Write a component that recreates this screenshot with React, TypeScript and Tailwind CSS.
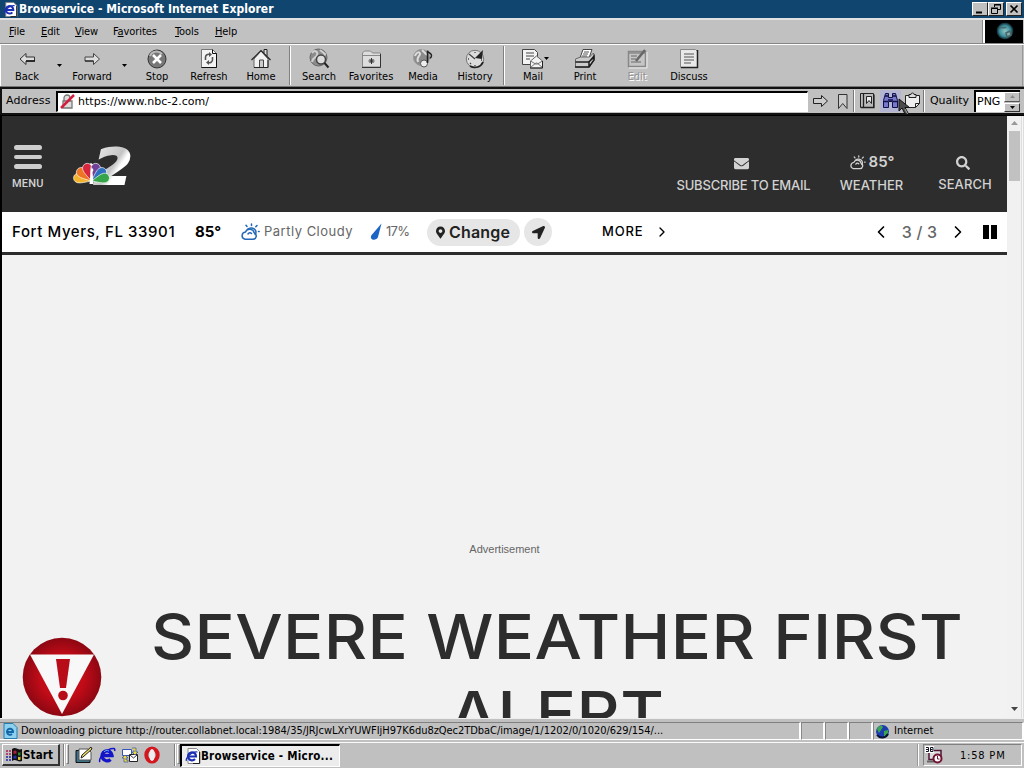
import React from "react";
import { ChevronLeft, ChevronRight } from "lucide-react";
import { FaEnvelope, FaLocationArrow, FaMapMarkerAlt, FaSearch } from "react-icons/fa";

const ui = "font-['DejaVu_Sans_Condensed','DejaVu_Sans',sans-serif] text-[11px] leading-[14px]";
const site = "font-['Inter',sans-serif]";

function IELogo({ size = 16 }: { size?: number }) {
  return (
    <svg width={size} height={size} viewBox="0 0 16 16">
      <path d="M3 .5h8.500l3.500 3.500v11.500H3z" fill="#fff" stroke="#888" />
      <path d="M14.500 4v11.500H8" fill="none" stroke="#222" />
      <path d="M3.500 8.500h7.500a4 4 0 1 0-1 2.500" fill="none" stroke="#1b2fb4" strokeWidth="2.200" />
      <path d="M1.500 13C0 11 6 3 12.500 4" fill="none" stroke="#1b2fb4" strokeWidth="1.200" />
    </svg>
  );
}

function BigE() {
  return (
    <svg width="18" height="18" viewBox="0 0 18 18">
      <path d="M5 9.500h9a5 5 0 1 0-1.500 4" fill="none" stroke="#1414c8" strokeWidth="3.400" />
      <path d="M2 16C0 13 8 2 16 2.500c1 .5 1 1.500.5 2.500" fill="none" stroke="#1414c8" strokeWidth="1.500" />
      <path d="M6 6c1-1.500 3-2 5-1" fill="none" stroke="#5db8ff" />
    </svg>
  );
}

function WinButton({ children }: { children: React.ReactNode }) {
  return (
    <div className="h-[14px] w-4 border border-t-white border-l-white border-r-[#222] border-b-[#222] bg-[#c0c0c0]">
      <svg width="14" height="12" viewBox="0 0 14 12" fill="none" stroke="#000">
        {children}
      </svg>
    </div>
  );
}

function Tool({ label, disabled, children }: { label: string; disabled?: boolean; children: React.ReactNode }) {
  return (
    <div className="flex w-[52px] flex-col items-center pt-[3px]">
      <svg width="22" height="21" viewBox="0 0 22 21" fill="none">
        {children}
      </svg>
      <div className={`${ui} mt-px whitespace-nowrap ${disabled ? "text-[#949494] [text-shadow:1px_1px_0_#fff]" : "text-black"}`}>{label}</div>
    </div>
  );
}

function Caret() {
  return (
    <div className="flex w-[13px] items-center justify-center">
      <svg width="5" height="3" viewBox="0 0 5 3"><path d="M0 0h5L2.500 3z" fill="#000" /></svg>
    </div>
  );
}

function Divider() {
  return <div className="mx-[2px] my-px w-[2px] border-l border-l-[#808080] border-r border-r-white" />;
}

function PartlyCloudy({ color, w = 20, h = 18 }: { color: string; w?: number; h?: number }) {
  return (
    <svg width={w} height={h} viewBox="0 0 20 18" fill="none" stroke={color} strokeWidth="1.500" strokeLinecap="round">
      <path d="M5 16.300h8a3.400 3.400 0 0 0 1.200-6.500A4.600 4.600 0 0 0 5.500 9 3.700 3.700 0 0 0 5 16.300z" />
      <path d="M7.500 6.300c2.500-2.300 6.500-1.500 8 1 .9 1.700.5 3-.4 4.200M8 11c1-1.500 2.500-1.500 3.500-.5" />
      <path d="M11.500 1v1.500M6 2.300l1 1.200M17 2.500l-1.200 1.300M19.200 8.500h-.7" />
    </svg>
  );
}

function NbcLogo() {
  const c = ["#f4b32c", "#ee7523", "#d8263c", "#704199", "#2f6fc0", "#36a448"];
  const a = [-77, -50, -18, 18, 50, 77];
  return (
    <svg className="overflow-visible" width="60" height="42" viewBox="0 0 60 42">
      <defs>
        <linearGradient id="two" x1="0" y1="0" x2="1" y2="1">
          <stop offset="0" stopColor="#f4f4f4" />
          <stop offset=".5" stopColor="#c4c4c4" />
          <stop offset=".6" stopColor="#fff" />
        </linearGradient>
      </defs>
      <text transform="translate(22 39.500) scale(1.100 1)" fontFamily="DejaVu Sans" fontWeight="700" fontStyle="italic" fontSize="50" fill="url(#two)" stroke="url(#two)" strokeWidth="2">2</text>
      <path d="M19 40 15 22l4-3 4 3z" fill="#fff" />
      {a.map((r, i) => (
        <path key={r} transform={`translate(19.500 37) rotate(${r})`} d="M0 0C-2-5-5-10-4.800-13.500a4.800 4.800 0 0 1 9.600 0C5-10 2-5 0 0z" fill={c[i]} stroke="#fff" strokeWidth=".6" />
      ))}
      <path d="m19.500 23 2 3-1 2 1 12h-4l1-11z" fill="#fff" />
    </svg>
  );
}

function TitleBar() {
  return (
    <div className="flex h-[18px] shrink-0 items-center bg-[#10456f] pr-0.5 pl-[3px]">
      <IELogo size={15} />
      <div className="ml-px flex-1 pt-px font-['DejaVu_Sans_Condensed',sans-serif] text-[12px] leading-[17px] font-bold tracking-[0.06px] text-white">
        Browservice - Microsoft Internet Explorer
      </div>
      <WinButton><path d="M3 9.500h6" strokeWidth="2" /></WinButton>
      <WinButton><path d="M5.500 4V1.500h6v5H9M5 2h7M2.500 5.500h6v5h-6zM2 5h7" /></WinButton>
      <div className="w-0.5" />
      <WinButton><path d="m3.500 2.500 7 7m0-7-7 7" strokeWidth="1.700" /></WinButton>
    </div>
  );
}

function MenuBar() {
  const items = [["F", "ile", "w-[32px]"], ["E", "dit", "w-[34px]"], ["V", "iew", "w-[38px]"], ["F", "avorites", "w-[62px]"], ["T", "ools", "w-[40px]"], ["H", "elp", "w-[40px]"]];
  return (
    <div className="flex h-[26px] shrink-0 border-t-2 border-b border-t-[#e2e2e2] border-b-[#868686] bg-[#c1c1c1]">
      <div className={`${ui} flex flex-1 border-r border-[#888] pt-[5px] pl-[9px] tracking-[-0.1px] text-black`}>
        {items.map(([u, rest, w]) => (
          <div key={rest} className={`${w} whitespace-nowrap`}>
            {rest === "avorites" ? <>F<u>a</u>vorites</> : <><u>{u}</u>{rest}</>}
          </div>
        ))}
      </div>
      <div className="mr-px flex w-10 items-center justify-center border-l-2 border-l-white bg-black">
        <svg width="20" height="20" viewBox="0 0 20 20">
          <defs><radialGradient id="globe"><stop offset="0" stopColor="#8fc4c2" /><stop offset=".65" stopColor="#3b8d9c" /><stop offset="1" stopColor="#0a1c22" /></radialGradient></defs>
          <circle cx="11" cy="9" r="8.500" fill="url(#globe)" />
          <path d="M5 7c3-3 5 0 7-2M12 11l4-2 1 4-4 2z" stroke="#47696b" strokeWidth="1.500" fill="#8aa8a5" />
        </svg>
      </div>
    </div>
  );
}

function Toolbar() {
  return (
    <div className="flex h-[43px] shrink-0 border-t border-b border-t-white border-b-[#777] bg-[#c0c0c0] pr-[1px]">
      <div className="flex flex-1 border-r border-l border-r-[#999] border-l-white">
        <Tool label="Back"><path d="M4 11 10 5.500V9h8.500v4H10v3.500z" fill="#ddd" stroke="#333" /><path d="M10 13h9" stroke="#111" strokeWidth="1.500" /></Tool>
        <Caret />
        <Tool label="Forward"><path d="m18.500 11-6-5.500V9H4v4h8.500v3.500z" fill="#ddd" stroke="#444" /><path d="M4 13h8.500" stroke="#111" /></Tool>
        <Caret />
        <Tool label="Stop"><circle cx="11" cy="11" r="9" fill="#777" stroke="#333" /><path d="M4 8c2-5 8-6 12-2" stroke="#bbb" strokeWidth="2" /><path d="m7 7 8 8m0-8-8 8" stroke="#fff" strokeWidth="2.500" /></Tool>
        <Tool label="Refresh"><path d="M3.500 1.500h11l4 4v14h-15z" fill="#f4f4f4" stroke="#777" /><path d="M18.500 5.500v14h-15M14.500 1.500v4h4" stroke="#111" /><path d="M7.500 12V9a3 3 0 0 1 4-2.500M14.500 9v3a3 3 0 0 1-4 2.500" stroke="#555" strokeWidth="1.600" /><path d="m11 4 3 2.500L11 9zM11 12l-3 2.500L11 17z" fill="#555" /></Tool>
        <Tool label="Home"><path d="M14 5V1.500h3V8" fill="#ddd" stroke="#222" /><path d="M4 11v8.500h14V11l-7-8z" fill="#f2f2f2" stroke="#666" /><path d="M1.500 12 11 2.500l9.500 9.500" stroke="#222" strokeWidth="1.200" /><path d="M9.500 19v-7h4v7" stroke="#444" fill="#ccc" /><path d="M18 12v7.500H4" stroke="#222" /></Tool>
        <Divider />
        <Tool label="Search"><circle cx="10.500" cy="9.500" r="8.500" fill="#8b8b8b" stroke="#666" /><path d="M4 5c3-4 6-1 5 2s-4 2-5 7M12 2l5 4-2 4" stroke="#d0d0d0" strokeWidth="2" /><circle cx="13" cy="11.500" r="4.500" fill="#ddd" stroke="#444" strokeWidth="1.500" /><path d="m16.500 15 4 4.500" stroke="#222" strokeWidth="2" /></Tool>
        <Tool label="Favorites"><path d="M2.500 19V5l2-2h6l2 2h8v14z" fill="#ddd" stroke="#888" /><path d="M2 19.500h18.500V6" stroke="#333" /><path d="M3 7.500h17" stroke="#888" /><path d="M11.500 10v6M8.500 13h6M9.500 11l4 4m0-4-4 4" stroke="#333" /></Tool>
        <Tool label="Media"><circle cx="9.500" cy="9.500" r="8" fill="#8b8b8b" stroke="#999" /><path d="M3 8c2-5 5-4 5-2s-4 3-2 8M10 2l5 5" stroke="#ddd" strokeWidth="2" /><circle cx="12" cy="15.500" r="3.500" fill="#eee" stroke="#555" /><path d="M15.500 15V2.500c.5 3 4 2 4 5 0 2-1 2-1.500 3" stroke="#222" strokeWidth="1.500" /></Tool>
        <Tool label="History"><circle cx="11" cy="11" r="8.700" fill="#dcdcdc" stroke="#777" /><path d="M19 14c-2 5-8 7-13 4" stroke="#222" strokeWidth="1.800" /><path d="m11 10 8-8-1 9z" fill="#222" /><path d="m5 6 6 5M11 4v1M4 11h1M11 17v1M17 12h1M7 15l-1 1" stroke="#444" strokeWidth="1.300" /></Tool>
        <Divider />
        <div className="relative">
          <Tool label="Mail"><path d="M.5 1.500h12l3 3v12H.5z" fill="#f4f4f4" stroke="#444" /><path d="M4 5h8M4 8h8M4 11h4" stroke="#444" /><path d="m8.500 13 6-5 6 5v7h-12z" fill="#f4f4f4" stroke="#666" /><path d="m9 19 5-4h1l5 4M8.500 13l5 3h2l5-3" stroke="#777" /><path d="M8 20h12.500v-7" stroke="#222" /></Tool>
          <div className="absolute top-[6px] left-[33px] flex h-[14px]"><Caret /></div>
        </div>
        <Tool label="Print"><path d="m6 10 3-8.500h9L15 10z" fill="#fff" stroke="#444" /><path d="M10 4h5M9 6h5M8 8h5" stroke="#555" /><path d="m1.500 11 5-2h9l4-4 1 6-5 8h-14z" fill="#ccc" stroke="#666" /><path d="M1.500 14h13l6-5M1 19h14l5-7v-4l-5 6v5" stroke="#1c1c1c" strokeWidth="1.500" /></Tool>
        <Tool label="Edit" disabled><path d="M2.500 3.500h17v15h-17z" fill="#c5c5c5" stroke="#888" strokeWidth="1.500" /><path d="M3 5h16M5 8h6M5 11h5M5 14h10" stroke="#888" strokeWidth="1.500" /><path d="m10 13 9-11" stroke="#666" strokeWidth="2.500" /><path d="M3 20h18V4" stroke="#eee" /></Tool>
        <Tool label="Discuss"><path d="M2.500 1.500h15l2 2v16h-17z" fill="#e9e9e9" stroke="#888" /><path d="M19.500 2v17.500H3" stroke="#222" strokeWidth="1.500" /><path d="M6 6h10M6 9h10M6 12h10M6 15h7" stroke="#555" /></Tool>
      </div>
    </div>
  );
}

function AddressBar() {
  const box = "flex h-[22px] items-center justify-center";
  return (
    <div className="flex h-7 shrink-0 items-center border-t-2 border-b-2 border-l-2 border-[#111] bg-[#c0c0c0] pr-1 font-['DejaVu_Sans',sans-serif] text-[11px] leading-[14px] text-black">
      <div className="w-[54px] pl-1 tracking-[0.1px]">Address</div>
      <div className="flex h-[21px] w-[752px] items-center border-t-2 border-r border-b border-l-2 border-t-black border-l-black border-r-white border-b-white bg-white pl-px">
        <svg width="18" height="18" viewBox="0 0 18 18" fill="none">
          <path d="M5 8V5a3 3 0 0 1 6 0v3M4 8h9v7H4z" stroke="#777" strokeWidth="1.300" fill="#ddd" />
          <path d="M2 15 15 2" stroke="#d51d3e" strokeWidth="2.500" />
        </svg>
        <span className="ml-px tracking-[0.02px]">https://www.nbc-2.com/</span>
      </div>
      <div className={`${box} w-[25px]`}>
        <svg width="18" height="14" viewBox="0 0 18 14"><path d="M1.500 4.500h8V1.500l6 5.500-6 5.500v-3h-8z" fill="#ccc" stroke="#222" /></svg>
      </div>
      <div className={`${box} w-[20px]`}>
        <svg width="12" height="17" viewBox="0 0 12 17"><path d="M1.500 1.500h8.500v14l-4.250-5-4.250 5z" fill="#ccc" stroke="#333" /></svg>
      </div>
      <div className="h-[22px] border-r border-l border-r-white border-l-[#777]" />
      <div className={`${box} w-[25px]`}>
        <svg width="17" height="18" viewBox="0 0 17 18" fill="none"><path d="M1.500 1.500h13v14h-13z" fill="#bbb" stroke="#222" /><path d="M4.500 2v13M2 15.500h13v-13" stroke="#222" strokeWidth="1.300" /><path d="M7.500 4.500h5v7l-2.500-3-2.500 3z" fill="#eee" stroke="#222" /></svg>
      </div>
      <div className={`${box} relative w-[21px] bg-[#b4b4d3]`}>
        <svg width="17" height="18" viewBox="0 0 17 18"><path d="M3.500 1.500h3v4h4v-4h3l2 7v7h-5v-6h-4v6h-5v-7z" fill="#7777cc" stroke="#101044" /><path d="M3 4h4m3 0h4M2 9.500h4m5 0h4M6 8h5" stroke="#101044" strokeWidth="1.300" /></svg>
        <svg className="absolute top-[8px] left-[18px] z-10" width="14" height="18" viewBox="0 0 14 18"><path d="M1 1v12l3-3 3 6 3-1-3-5.500h4.500z" fill="#4c4c4c" stroke="#111" /><path d="M7 11l2.500 5" stroke="#aaa" /></svg>
      </div>
      <div className={`${box} w-[22px]`}>
        <svg width="17" height="18" viewBox="0 0 17 18"><path d="M1.500 3.500h14v8l-4 4h-8l-2-2z" fill="#eee" stroke="#222" /><path d="M5 5.500v-3h2a1.500 1.500 0 0 1 3 0h2v3z" fill="#ddd" stroke="#222" /><path d="M11.500 15.500v-4h4" fill="none" stroke="#222" /></svg>
      </div>
      <div className="h-[22px] border-r border-l border-r-white border-l-[#777]" />
      <div className="flex-1 pl-[5px] tracking-[-0.05px]">Quality</div>
      <div className="flex h-[22px] w-[46px] items-center border-t-2 border-l-2 border-t-black border-l-black bg-white">
        <span className="w-7 pl-px">PNG</span>
        <div className="flex h-full w-[16px] flex-col gap-px bg-[#c0c0c0] text-black">
          <div className="flex flex-1 items-center justify-center border border-t-white border-l-white border-r-[#777] border-b-[#555]"><svg width="5" height="3"><path d="M0 3h5L2.500 0z" fill="#888" /></svg></div>
          <div className="flex flex-1 items-center justify-center border border-t-white border-l-white border-r-[#333] border-b-[#333]"><svg width="5" height="3"><path d="M0 0h5L2.500 3z" /></svg></div>
        </div>
      </div>
    </div>
  );
}

function SiteHeader() {
  return (
    <div className={`${site} flex h-[96px] shrink-0 bg-[#2d2d2d] text-[13px] leading-4 text-[#d2d2d2]`}>
      <div className="w-[70px] pt-[29px] pl-[10px]">
        <div className="ml-0.5 flex w-7 flex-col gap-[5px]">
          <div className="h-[4.500px] rounded-sm bg-[#cecece]" />
          <div className="h-[4.500px] rounded-sm bg-[#cecece]" />
          <div className="h-[4.500px] rounded-sm bg-[#cecece]" />
        </div>
        <div className="mt-2 font-['Roboto',sans-serif] text-[11px] leading-[14px] font-medium tracking-[0.2px]">MENU</div>
      </div>
      <div className="flex-1 pt-[28px]"><NbcLogo /></div>
      <div className="flex w-[134px] flex-col items-center pt-[40px]">
        <FaEnvelope size={15} className="mr-[3px]" />
        <div className="mt-[6px] -mr-px font-medium tracking-[-0.2px] whitespace-nowrap">SUBSCRIBE TO EMAIL</div>
      </div>
      <div className="ml-[30px] flex w-[63px] flex-col items-center pt-[38px]">
        <div className="flex items-center gap-[3px] text-[15px] font-semibold"><PartlyCloudy color="#d2d2d2" w={17} h={15} />85°</div>
        <div className="mt-[7px] font-medium">WEATHER</div>
      </div>
      <div className="mr-4 ml-9 flex w-[52px] flex-col items-center pt-[40px]">
        <FaSearch size={14} className="mr-1" />
        <div className="mt-[6px] font-medium tracking-[0.1px]">SEARCH</div>
      </div>
    </div>
  );
}

function WeatherStrip() {
  return (
    <div className={`${site} flex h-[43px] shrink-0 items-center border-b-[3px] border-[#2d2d2d] bg-white text-black`}>
      <div className="w-[183px] pl-[10px] text-[15px] font-medium tracking-[0.6px] whitespace-nowrap">Fort Myers, FL 33901</div>
      <div className="ml-[10px] w-[45px] text-[15px] font-bold">85°</div>
      <PartlyCloudy color="#2368b8" />
      <div className="ml-[4px] w-[106px] text-[13px] tracking-[0.5px] whitespace-nowrap text-[#666]">Partly Cloudy</div>
      <svg width="12" height="18" viewBox="0 0 12 18"><path d="M11.500.5 8 14c-1 3-6 4-7 1-.5-1.500.5-3 1.500-4z" fill="#1b65c5" /></svg>
      <div className="ml-[4px] w-[41px] text-[13px] tracking-[-0.7px] text-[#666]">17%</div>
      <div className="flex h-[27px] w-[93px] items-center rounded-full bg-[#e6e6e6] pl-[9px] text-[16px] font-semibold tracking-[0.2px] text-[#222]">
        <FaMapMarkerAlt size={13} className="mr-1 w-[9px] shrink-0" />Change
      </div>
      <div className="ml-1 flex size-7 items-center justify-center rounded-full bg-[#e6e6e6] text-[#222]"><FaLocationArrow size={13} /></div>
      <div className="ml-[50px] w-[52px] text-[13px] font-medium tracking-[0.8px]">MORE</div>
      <ChevronRight size={16} />
      <div className="flex-1" />
      <ChevronLeft size={20} />
      <div className="w-[57px] text-center text-[16px] font-medium tracking-[0.2px] whitespace-nowrap text-[#666]">3 / 3</div>
      <ChevronRight size={20} />
      <div className="mr-[10px] ml-[15px] flex gap-0.5"><div className="h-[14px] w-[6px] bg-black" /><div className="h-[14px] w-[6px] bg-black" /></div>
    </div>
  );
}

function AlertIcon() {
  return (
    <svg width="80" height="80" viewBox="0 0 80 80">
      <defs><radialGradient id="red"><stop offset=".55" stopColor="#c20c18" /><stop offset="1" stopColor="#8c0712" /></radialGradient></defs>
      <circle cx="40" cy="40" r="39.300" fill="url(#red)" />
      <path d="M8 17.500h64L40 77z" fill="#f8f8f8" />
      <path d="M34 22h14l-4 29h-6z" fill="#b80d19" />
      <circle cx="41" cy="58.500" r="4.800" fill="#b80d19" />
    </svg>
  );
}

function Page() {
  return (
    <div className="flex h-[603px] shrink-0 border-t border-l-2 border-black bg-[#f2f2f2]">
      <div className="flex w-[1005px] flex-col overflow-hidden">
        <SiteHeader />
        <WeatherStrip />
        <div className="mt-[287px] text-center font-['Liberation_Sans',sans-serif] text-[11px] leading-[14px] text-[#666]">Advertisement</div>
        <div className="mt-[41px] flex">
          <div className="mt-[40px] ml-5"><AlertIcon /></div>
          <div className={`${site} ml-[8px] w-[894px] scale-x-[1.08] pt-px text-center text-[62px] leading-[77px] font-[550] tracking-[0.300px] whitespace-nowrap text-[#2d2d2d]`}>
            <div>SEVERE WEATHER FIRST</div>
            <div>ALERT</div>
          </div>
        </div>
      </div>
      <div className="flex w-[14px] flex-col items-center bg-[#f1f1f1]">
        <svg className="mt-[5px]" width="7" height="4"><path d="M0 4h7L3.500 0z" fill="#999" /></svg>
        <div className="mt-[6px] h-[50px] w-[11px] bg-[#c1c1c1]" />
        <div className="flex-1" />
        <svg className="mb-[7px]" width="7" height="4"><path d="M0 0h7L3.500 4z" fill="#444" /></svg>
      </div>
      <div className="flex-1 border-r border-l border-[#ddd] bg-[#f7f7f7]" />
    </div>
  );
}

function StatusBar() {
  const cell = "border-t border-r-2 border-b border-t-[#808080] border-r-white border-b-white border-l border-l-[#888]";
  return (
    <div className="flex h-6 shrink-0 border-t border-[#eee] bg-[#c0c0c0] pt-[3px] pb-[2px] text-black">
      <div className={`${cell} ${ui} flex w-[801px] items-center border-l-0 pl-[3px] tracking-[-0.045px] whitespace-nowrap`}>
        <svg width="15" height="16" viewBox="0 0 15 16"><path d="M1 .5h9l4 4v11H1z" fill="#8ed0ef" stroke="#287dad" /><path d="M4 9h6a3 3 0 1 0-1 2" fill="none" stroke="#1267a6" strokeWidth="2" /></svg>
        <span className="ml-[3px]">Downloading picture http://router.collabnet.local:1984/35/JRJcwLXrYUWFIjH97K6du8zQec2TDbaC/image/1/1202/0/1020/629/154/...</span>
      </div>
      <div className={`${cell} w-6`} /><div className={`${cell} w-6`} /><div className={`${cell} w-6`} />
      <div className={`${cell} ${ui} flex flex-1 items-center pl-px`}>
        <svg width="15" height="15" viewBox="0 0 15 15"><circle cx="7.500" cy="7.500" r="6.500" fill="#1b3cae" /><path d="M2 5c2-4 5-4 6-2L6 6l-2 3zM9 7l4-1v3l-4 4z" fill="#39a64a" /><path d="M2 11c3 4 9 3 11-1" fill="none" stroke="#071333" strokeWidth="2" /></svg>
        <span className="ml-1">Internet</span>
      </div>
    </div>
  );
}

function Taskbar() {
  const bold = "font-['DejaVu_Sans_Condensed',sans-serif] text-[11.500px] leading-[14px] font-bold";
  const grip = <div className="flex h-[22px] gap-px"><div className="w-[2px] border-l border-[#808080] bg-white" /><div className="h-[20px] w-[3px] border border-t-white border-l-white border-r-[#777] border-b-[#777]" /></div>;
  return (
    <div className="flex h-[26px] shrink-0 items-center border-t border-[#fafafa] bg-[#c0c0c0] px-0.5 pb-px text-black">
      <div className={`${bold} flex h-[22px] w-[58px] items-center border-t border-r-2 border-b-2 border-l border-t-white border-l-white border-r-[#333] border-b-[#333] pl-[3px] tracking-[0.15px]`}>
        <svg className="shrink-0" width="17" height="16" viewBox="0 0 17 16"><path d="M6 2c4-3 6 2 10 0v12c-4 2-6-3-10 0z" fill="#111" /><path d="M7.500 4q2-1 3 0v3q-1-1-3 0z" fill="#b0203c" /><path d="M12 5q1 1 2.500 0v3q-1.500 1-2.500 0z" fill="#258a30" /><path d="M7.500 9q2-1 3 0v3q-1-1-3 0z" fill="#2430b0" /><path d="M12 9.500q1 1 2.500 0v3q-1.500 1-2.500 0z" fill="#d8c42a" /><path d="M0 4h2m1 0h2M0 7h2m1 0h2" stroke="#a41f55" strokeWidth="1.500" /><path d="M0 10h2m1 0h2M0 13h2m1 0h2" stroke="#2424a0" strokeWidth="1.500" /></svg>
        Start
      </div>
      <div className="ml-[3px] flex w-[111px] items-center">
        {grip}
        <div className="ml-[6px] flex items-center gap-[5px]">
          <svg width="18" height="18" viewBox="0 0 18 18"><path d="M1 4.500h14v12H1z" fill="#3c7389" stroke="#111" /><path d="M4 3h9l3 3v8H4z" fill="#fff" stroke="#555" /><path d="m6 12 1-3 9-8 1 2-9 8z" fill="#f1dc62" stroke="#222" /></svg>
          <BigE />
          <svg width="18" height="18" viewBox="0 0 18 18"><path d="M1.500 3.500h9v6h-9z" fill="#fff" stroke="#3355bb" /><path d="M8.500 8.500h8v7h-8z" fill="#fff" stroke="#222" /><path d="m9 9 3.500 3L16 9" fill="none" stroke="#333" /><path d="M11 2h4v4h2l-3 3-3-3h2V4M7 16H3v-4H1l3-3 3 3H5v2h2z" fill="#efdc39" stroke="#3450a4" strokeWidth=".7" /></svg>
          <svg width="16" height="18" viewBox="0 0 16 18"><ellipse cx="8" cy="9" rx="5.700" ry="6.500" fill="none" stroke="#d2171f" strokeWidth="4" /><ellipse cx="8" cy="9" rx="2.800" ry="6" fill="#eee" /></svg>
        </div>
      </div>
      {grip}
      <div className={`${bold} flex h-[23px] w-[160px] items-center border-t-2 border-r border-b border-l-2 border-t-black border-l-black border-r-white border-b-white bg-[#ececec] pl-[3px] tracking-[0.24px]`}>
        <IELogo /><span>Browservice - Micro...</span>
      </div>
      <div className="flex-1" />
      <div className="h-[22px] border-r border-l border-l-[#999] border-r-white" />
      <div className={`${ui} ml-1 flex h-[22px] w-[99px] items-center border border-t-[#808080] border-l-[#808080] border-r-white border-b-white pl-px`}>
        <svg width="18" height="18" viewBox="0 0 18 18"><path d="M4 4.500h12v9H4z" fill="#ddd" stroke="#501436" strokeWidth="1.500" /><path d="M2 15.500h8" stroke="#666" strokeWidth="2" /><path d="M0 0h9v7H0z" fill="#fff" /><path d="M1 1.500h2.500v4H1M1 3.500h2M5.500 1.500h2.500v4H5.500zM5.500 3.500h2" fill="none" stroke="#112" /><circle cx="12.500" cy="12.500" r="4" fill="#fff" stroke="#721333" strokeWidth="2" /><path d="M12.500 10v3h2" fill="none" stroke="#721333" /></svg>
        <span className="ml-[17px] pt-0.5 tracking-[0.8px]">1:58 PM</span>
      </div>
    </div>
  );
}

export default function App() {
  return (
    <div className="flex h-[768px] w-[1024px] flex-col overflow-hidden bg-[#c0c0c0]">
      <TitleBar />
      <MenuBar />
      <Toolbar />
      <AddressBar />
      <Page />
      <StatusBar />
      <Taskbar />
    </div>
  );
}
